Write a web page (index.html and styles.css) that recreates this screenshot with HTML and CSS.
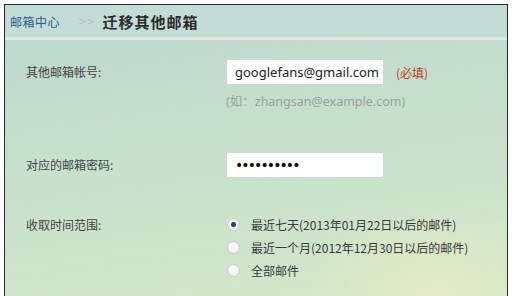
FILE: index.html
```html
<!DOCTYPE html>
<html>
	<head>
		<meta charset="UTF-8">
		<title>迁移其他邮箱</title>
		<link rel="stylesheet" href="styles.css">
	</head>
	<body>
		<div class="frame">
			<!--顶部导航-->
			<div class="crumb">
				<a class="home">邮箱中心</a>
				<span class="sep">&gt;&gt;</span>
				<span class="title">迁移其他邮箱</span>
			</div>
			<div class="stripe"></div>
			<!--表单区-->
			<div class="main">
				<div class="row first">
					<label class="lab">其他邮箱帐号:</label>
					<div class="field">
						<div class="line">
							<input class="txt" type="text" value="googlefans@gmail.com">
							<span class="must">(必填)</span>
						</div>
						<div class="tip">(如：zhangsan@example.com)</div>
					</div>
				</div>
				<div class="row pwd">
					<label class="lab">对应的邮箱密码:</label>
					<div class="field">
						<input class="txt dots" type="password" value="1234567890">
					</div>
				</div>
				<div class="row range">
					<label class="lab">收取时间范围:</label>
					<div class="field">
						<label class="opt"><input type="radio" name="r" checked><span>最近七天(2013年01月22日以后的邮件)</span></label>
						<label class="opt"><input type="radio" name="r"><span>最近一个月(2012年12月30日以后的邮件)</span></label>
						<label class="opt"><input type="radio" name="r"><span>全部邮件</span></label>
					</div>
				</div>
			</div>
		</div>
	</body>
</html>
```

FILE: styles.css
```css
*{
	margin: 0;
	padding: 0;
	box-sizing: border-box;
}
body{
	background: #fff;
	font-family: "Noto Sans CJK SC", "Noto Sans", sans-serif;
	font-size: 12px;
	color: #444;
}
.frame{
	margin: 4px 0 0 4px;
	width: 504px;
	height: 300px;
	border: 1px solid #2a2f2c;
	border-bottom: none;
	background: linear-gradient(172deg, #bad6cf 0%, #c6dfcd 40%, #d4e8c8 100%);
	position: relative;
	overflow: hidden;
}
.frame::after{
	content: "";
	position: absolute;
	right: -60px;
	bottom: -80px;
	width: 260px;
	height: 180px;
	background: radial-gradient(ellipse at center, rgba(236,236,196,0.7), rgba(236,236,196,0) 70%);
}
.crumb{
	height: 32px;
	background: #c3dcd5;
	display: flex;
	align-items: center;
	padding-left: 5px;
}
.home{
	color: #2d5d8e;
	font-size: 12px;
	letter-spacing: 0.5px;
}
.sep{
	color: #aac3bb;
	font-family: "DejaVu Sans", sans-serif;
	font-size: 11px;
	margin: 0 8px 0 18px;
	letter-spacing: -1px;
}
.title{
	font-size: 15px;
	font-weight: bold;
	color: #2b2b2b;
	letter-spacing: 1px;
}
.stripe{
	height: 3px;
	background: #dce9e3;
}
.main{
	padding-left: 21px;
	position: relative;
	z-index: 1;
}
.row{
	display: flex;
}
.row.first{
	margin-top: 19px;
}
.row.pwd{
	margin-top: 41px;
}
.row.range{
	margin-top: 35px;
}
.lab{
	width: 200px;
	line-height: 26px;
	color: #444;
}
.range .lab{
	line-height: 23px;
}
.line{
	display: flex;
	align-items: center;
}
.txt{
	width: 158px;
	height: 26px;
	border: 1px solid #cfd8d2;
	background: #fff;
	padding-left: 8px;
	font-family: "Noto Sans", sans-serif;
	font-size: 13px;
	color: #222;
	outline: none;
}
.dots{
	font-family: "DejaVu Sans", sans-serif;
	font-size: 14px;
	letter-spacing: -1.9px;
	color: #111;
}
.must{
	color: #c0392b;
	margin-left: 12px;
	font-size: 12px;
}
.tip{
	margin-top: 8px;
	line-height: 18px;
	color: #9aa39e;
	font-family: "Noto Sans", "Noto Sans CJK SC", sans-serif;
	font-size: 12.5px;
}
.opt{
	display: flex;
	align-items: center;
	height: 23px;
	color: #3a3a3a;
}
.opt input{
	appearance: none;
	width: 13px;
	height: 13px;
	border-radius: 50%;
	border: 1px solid #c9cfcc;
	background: radial-gradient(circle at 40% 35%, #fff, #e4e8e6);
	margin: 0 11px 0 1px;
	position: relative;
}
.opt input:checked::after{
	content: "";
	position: absolute;
	left: 3px;
	top: 3px;
	width: 5px;
	height: 5px;
	border-radius: 50%;
	background: #1d3d7c;
}
.opt span{
	font-size: 12px;
}
```
